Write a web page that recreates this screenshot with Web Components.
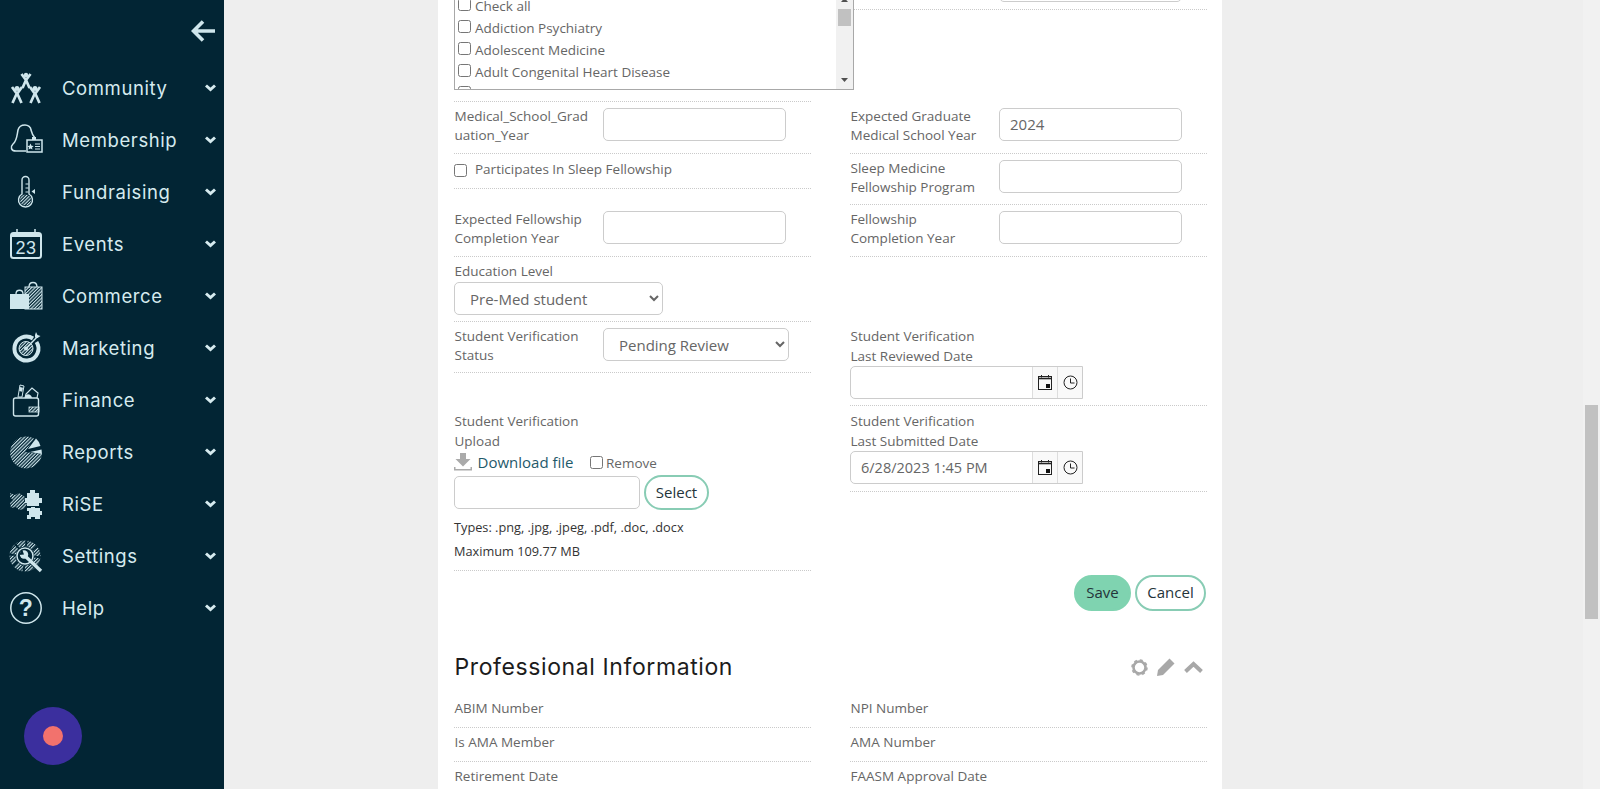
<!DOCTYPE html>
<html>
<head>
<meta charset="utf-8">
<title>Profile</title>
<style>
    html, body { margin: 0; height: 100%; overflow: hidden; }
    body { display: flex; font-family: "Open Sans", "Liberation Sans", sans-serif; background: #eeeeee; }
</style>
</head>
<body>

<side-bar>
    <nav-item icon="community">Community</nav-item>
    <nav-item icon="membership">Membership</nav-item>
    <nav-item icon="fundraising">Fundraising</nav-item>
    <nav-item icon="events">Events</nav-item>
    <nav-item icon="commerce">Commerce</nav-item>
    <nav-item icon="marketing">Marketing</nav-item>
    <nav-item icon="finance">Finance</nav-item>
    <nav-item icon="reports">Reports</nav-item>
    <nav-item icon="rise">RiSE</nav-item>
    <nav-item icon="settings">Settings</nav-item>
    <nav-item icon="help">Help</nav-item>
</side-bar>

<page-main>
    <form-grid>
        <field-cell stack style="height:142px;padding-top:35px">
            <check-list></check-list>
        </field-cell>
        <field-cell label=" " style="height:50px;padding-top:9px"><text-box></text-box></field-cell>

        <field-cell label="Medical_School_Graduation_Year" style="height:52px"><text-box></text-box></field-cell>
        <field-cell label="Expected Graduate Medical School Year" style="height:52px"><text-box value="2024"></text-box></field-cell>

        <field-cell style="height:35px;padding-top:5.5px">
            <check-row>Participates In Sleep Fellowship</check-row>
        </field-cell>
        <field-cell label="Sleep Medicine Fellowship Program" style="height:51px"><text-box></text-box></field-cell>

        <field-cell label="Expected Fellowship Completion Year" style="height:52px"><text-box></text-box></field-cell>
        <field-cell label="Fellowship Completion Year" style="height:52px"><text-box></text-box></field-cell>

        <field-cell stack label="Education Level" style="height:65px;padding-top:5px">
            <select-box value="Pre-Med student" width="209"></select-box>
        </field-cell>
        <div></div>

        <field-cell label="Student Verification Status" style="height:51px"><select-box value="Pending Review" width="186"></select-box></field-cell>
        <field-cell stack label="Student Verification&#10;Last Reviewed Date" lh="19.5" style="height:84px;padding-top:5px"><date-box></date-box></field-cell>

        <field-cell stack label="Student Verification&#10;Upload" lh="20" style="height:165px;padding-top:5px">
            <file-upload></file-upload>
        </field-cell>
        <field-cell stack label="Student Verification&#10;Last Submitted Date" lh="20" style="height:86px;padding-top:5px"><date-box value="6/28/2023 1:45 PM"></date-box></field-cell>
    </form-grid>

    <button-bar>
        <pill-button primary>Save</pill-button>
        <pill-button width="71">Cancel</pill-button>
    </button-bar>

    <section-head>Professional Information</section-head>

    <form-grid>
        <field-cell plain label="ABIM Number" style="height:34px"></field-cell>
        <field-cell plain label="NPI Number" style="height:34px"></field-cell>
        <field-cell plain label="Is AMA Member" style="height:34px"></field-cell>
        <field-cell plain label="AMA Number" style="height:34px"></field-cell>
        <field-cell plain label="Retirement Date" style="height:34px"></field-cell>
        <field-cell plain label="FAASM Approval Date" style="height:34px"></field-cell>
    </form-grid>
</page-main>

<page-scrollbar></page-scrollbar>

<script>
const HATCH = `<defs><pattern id="h" width="2.4" height="2.4" patternUnits="userSpaceOnUse" patternTransform="rotate(45)"><rect width="1.1" height="2.4" fill="#cfe6ec"/></pattern></defs>`;

const ICONS = {
    community: `<g fill="none" stroke="#cfe6ec" stroke-width="2.700">
            <path d="M12.500 3l4.500 6 4.500-6M17 9l-3.500 8M17 9l3.500 8"/>
            <path d="M3 16l5 7 5-7M8 22l-4.500 10M8 22l4.500 10"/>
            <path d="M21 16l5 7 5-7M26 22l-4.500 10M26 22l4.500 10"/>
        </g>
        <g fill="#cfe6ec"><circle cx="17" cy="4" r="2.200"/><circle cx="8" cy="17.500" r="2.500"/><circle cx="26" cy="17.500" r="2.500"/></g>`,
    membership: `<path d="M17 28H7C2 28 1 24 4 21c4-3 4-9 5-14 1-4 4-5 7-5s6 2 6 5c1 4 2 6 4 8" fill="none" stroke="#cfe6ec" stroke-width="1.500"/>
        <rect x="18" y="17" width="15" height="12" fill="#022534" stroke="#cfe6ec" stroke-width="1.500"/>
        <path d="M21.500 20.500l1 2.200 2.200.2-1.700 1.500.5 2.200-2-1.200-2 1.200.5-2.200-1.700-1.500 2.200-.2z" fill="#cfe6ec"/>
        <path d="M26 21h5M26 23.500h5M26 26h5" stroke="#cfe6ec"/><rect x="23" y="14" width="4" height="3" fill="#cfe6ec"/>`,
    fundraising: `<path d="M13 5a3.500 3.500 0 0 1 7 0V19a7 7 0 1 1-7 0Z" fill="none" stroke="#cfe6ec" stroke-width="1.400"/>
        <circle cx="16.500" cy="25" r="5.500" fill="url(#h)"/><path d="M16.500 9h3M16.500 13h3M16.500 17h3" stroke="#cfe6ec"/>
        <path d="M26 14l-3.500 2.500 3.500 2.500z" fill="#cfe6ec"/>`,
    events: `<rect x="2" y="6" width="30" height="25" rx="2.500" fill="none" stroke="#cfe6ec" stroke-width="2"/>
        <rect x="2" y="6" width="30" height="4" fill="#cfe6ec"/>
        <path d="M8 2v6M26 2v6" stroke="#cfe6ec" stroke-width="1.500"/>
        <text x="17" y="27" text-anchor="middle" font-family="Liberation Sans" font-size="18" fill="#cfe6ec">23</text>`,
    commerce: `<rect x="16" y="8" width="17" height="22" fill="url(#h)" stroke="#cfe6ec"/>
        <path d="M20 8c0-6 8-6 8 0" fill="none" stroke="#cfe6ec" stroke-width="1.300"/>
        <path d="M7 15c0-5 7-5 7 0" fill="none" stroke="#cfe6ec" stroke-width="1.300"/>
        <rect x="1" y="15" width="19" height="15" fill="#cfe6ec"/>`,
    marketing: `<path d="M24 7.500A12 12 0 1 0 27.500 11" fill="none" stroke="#cfe6ec" stroke-width="4"/>
        <circle cx="17" cy="17.500" r="7" fill="url(#h)" stroke="#cfe6ec"/><circle cx="17" cy="17.500" r="2" fill="#cfe6ec"/>
        <path d="M17 17.500L29 5" stroke="#cfe6ec" stroke-width="1.500"/><path d="M26 4l1-3 1.500 3 3 1-3 2-2.500-.5z" fill="#cfe6ec"/>`,
    finance: `<rect x="4.500" y="15" width="25" height="18" rx="2" fill="none" stroke="#cfe6ec" stroke-width="1.400"/>
        <rect x="20" y="24" width="10" height="5" fill="url(#h)" stroke="#cfe6ec" stroke-width=".8"/>
        <path d="M9 14l2-12 4 1-2 11z" fill="none" stroke="#cfe6ec"/><path d="M11 4l3 .8-.8 4-3-.8z" fill="#cfe6ec"/>
        <path d="M16 15l1-4 6-6 6 5-1 5" fill="none" stroke="#cfe6ec" stroke-width="1.200"/><path d="M16 15c0-5 6-5 7 0z" fill="#cfe6ec"/>`,
    reports: `<path d="M16 17L25 3.500A16 16 0 1 0 33 19Z" fill="url(#h)"/>
        <path d="M19 14L27 3.500A15 15 0 0 1 31.500 11Z" fill="#cfe6ec"/>
        <path d="M21 17L32.500 14.500L33 19Z" fill="#cfe6ec"/>`,
    rise: `<path d="M1 6l5 2 4-2 6 4-1 4 3 3-3 5-5 1-3-3-5 1-1-5 3-3-3-3z" fill="url(#h)"/>
        <path d="M18 6h3V3h5v3h4v5h3v5h-3v3h-12v-3h-2v-5h2z" fill="#cfe6ec"/>
        <path d="M18 21h4v-1h4v1h5v3h2v4h-2v4h-5v-2h-4v2h-4v-4h2v-4h-2z" fill="#cfe6ec"/>`,
    settings: `<circle cx="16" cy="17" r="12.500" fill="none" stroke="url(#h)" stroke-width="6"/>
        <circle cx="16" cy="17" r="12.500" fill="none" stroke="#022534" stroke-width="6.500" stroke-dasharray="2 7.800"/>
        <circle cx="16" cy="17" r="8" fill="#022534" stroke="#cfe6ec" stroke-width="1.500"/>
        <path d="M15 16l17 16" stroke="#cfe6ec" stroke-width="3.500"/><circle cx="15" cy="15.500" r="4.200" fill="#cfe6ec"/><path d="M13 10l2 5.500-5 .5z" fill="#022534"/>`,
    help: `<circle cx="17" cy="17" r="15.200" fill="none" stroke="#cfe6ec" stroke-width="1.500"/>
        <text x="17" y="25" text-anchor="middle" font-family="Liberation Sans" font-weight="700" font-size="23" fill="#cfe6ec">?</text>`
};

customElements.define('side-bar', class extends HTMLElement {
    constructor() {
        super();
        this.attachShadow({mode: 'open'}).innerHTML = `
            <style>
                :host {
                    display: block;
                    position: relative;
                    flex: 0 0 224px;
                    height: 100%;
                    background: #022534;
                }
                #back { display: flex; justify-content: flex-end; align-items: center; height: 61.5px; padding-right: 9px; box-sizing: border-box; }
                #bubble {
                    position: absolute; left: 24px; top: 707px;
                    width: 58px; height: 58px; border-radius: 50%;
                    background: #3b2f9e;
                    display: flex; align-items: center; justify-content: center;
                }
                #bubble div { width: 20px; height: 20px; border-radius: 50%; background: #f2726d; }
            </style>
            <div id="back">
                <svg width="24" height="24" viewBox="0 0 24 24" fill="none" stroke="#cfe6ec" stroke-width="3.600">
                    <path d="M24 12H3M12 2.500L2.500 12 12 21.500"/>
                </svg>
            </div>
            <slot></slot>
            <div id="bubble"><div></div></div>
        `;
    }
});

customElements.define('nav-item', class extends HTMLElement {
    constructor() {
        super();
        this.attachShadow({mode: 'open'});
    }
    connectedCallback() {
        this.shadowRoot.innerHTML = `
            <style>
                :host {
                    display: flex; align-items: center;
                    height: 52px; padding: 0 8px 0 9px; box-sizing: border-box;
                    font-family: Inter, "Liberation Sans", sans-serif;
                    font-size: 18.5px; font-weight: 400; letter-spacing: .6px; color: #d6ebef;
                }
                svg { flex: none; margin-right: 19px; }
                span { flex: 1; }
            </style>
            <svg width="34" height="34" viewBox="0 0 34 34">${HATCH}${ICONS[this.getAttribute('icon')]}</svg>
            <span><slot></slot></span>
            <svg width="11" height="8" viewBox="0 0 11 8" style="margin:0" fill="none" stroke="#d6ebef" stroke-width="3"><path d="M1 1.500l4.500 4 4.500-4"/></svg>
        `;
    }
});

customElements.define('page-main', class extends HTMLElement {
    constructor() {
        super();
        this.attachShadow({mode: 'open'}).innerHTML = `
            <style>
                :host { display: block; flex: 1; height: 100%; overflow: hidden; }
                #card {
                    width: 784px; margin: -40px 0 0 214px;
                    padding: 0 15px 0 16px; box-sizing: border-box;
                    background: #fff; min-height: 900px;
                }
            </style>
            <div id="card"><slot></slot></div>
        `;
    }
});

customElements.define('form-grid', class extends HTMLElement {
    constructor() {
        super();
        this.attachShadow({mode: 'open'}).innerHTML = `
            <style>
                :host { display: grid; grid-template-columns: 357px 357px; column-gap: 39px; align-items: start; }
            </style>
            <slot></slot>
        `;
    }
});

customElements.define('field-cell', class extends HTMLElement {
    constructor() {
        super();
        this.attachShadow({mode: 'open'});
    }
    connectedCallback() {
        const label = this.getAttribute('label');
        const lh = this.getAttribute('lh') || 19;
        const stack = this.hasAttribute('stack');
        const plain = this.hasAttribute('plain');
        this.shadowRoot.innerHTML = `
            <style>
                :host {
                    display: block; box-sizing: border-box; padding-top: ${plain ? 4.5 : 6}px;
                    border-bottom: 1px dotted #cacaca;
                    font-size: 13.5px; color: #666;
                }
                #wrap { display: ${stack ? 'block' : 'flex'}; align-items: flex-start; }
                #label {
                    margin-left: .5px; line-height: ${lh}px; white-space: pre-line;
                    overflow-wrap: break-word;
                    ${stack || plain ? '' : 'width: 136.5px; flex: none; margin-right: 12px; margin-top: -1.5px;'}
                }
                ${stack && label && !label.includes('\n') ? '#label { margin-bottom: 1px; }' : ''}
            </style>
            <div id="wrap">
                ${label ? `<div id="label">${label}</div>` : ''}
                <div><slot></slot></div>
            </div>
        `;
    }
});

customElements.define('text-box', class extends HTMLElement {
    constructor() {
        super();
        this.attachShadow({mode: 'open'});
    }
    connectedCallback() {
        this.shadowRoot.innerHTML = `
            <style>
                :host { display: block; }
                input {
                    display: block; width: ${this.getAttribute('width') || 183}px; height: 33px; box-sizing: border-box;
                    border: 1px solid #ccc; border-radius: 5px; padding: 0 10px 2px;
                    font: 15px "Open Sans", sans-serif; color: #666; background: #fff; outline: 0;
                }
            </style>
            <input type="text" value="${this.getAttribute('value') || ''}">
        `;
    }
});

customElements.define('select-box', class extends HTMLElement {
    constructor() {
        super();
        this.attachShadow({mode: 'open'});
    }
    connectedCallback() {
        this.shadowRoot.innerHTML = `
            <style>
                :host { display: block; }
                select {
                    display: block; width: ${this.getAttribute('width')}px; height: 33px; box-sizing: border-box;
                    border: 1px solid #ccc; border-radius: 5px; padding: 0 11px;
                    font: 15px "Open Sans", sans-serif; color: #666; background: #fff; outline: 0;
                }
            </style>
            <select><option>${this.getAttribute('value')}</option></select>
        `;
    }
});

customElements.define('date-box', class extends HTMLElement {
    constructor() {
        super();
        this.attachShadow({mode: 'open'});
    }
    connectedCallback() {
        this.shadowRoot.innerHTML = `
            <style>
                :host {
                    display: flex; width: 233px; height: 33px; box-sizing: border-box;
                    border: 1px solid #ccc; border-radius: 5px 0 0 5px;
                }
                input {
                    flex: 1; min-width: 0; border: 0; padding: 0 10px; background: transparent; outline: 0;
                    border-radius: 5px 0 0 5px;
                    font: 14.5px "Open Sans", sans-serif; color: #666;
                }
                .addon { flex: 0 0 25px; display: flex; align-items: center; justify-content: center; background: #f9f9f9; border-left: 1px solid #ddd; box-sizing: border-box; }
            </style>
            <input type="text" value="${this.getAttribute('value') || ''}">
            <div class="addon">
                <svg width="14" height="15" viewBox="0 0 14 15" fill="none" stroke="#222">
                    <rect x=".5" y="1.500" width="13" height="13"/><path d="M.5 3.500h13" stroke-width="1.600"/>
                    <path d="M3.500 0v2.500M10.500 0v2.500"/><rect x="8" y="9" width="4" height="4" fill="#111" stroke="none"/>
                </svg>
            </div>
            <div class="addon">
                <svg width="15" height="15" viewBox="0 0 15 15" fill="none" stroke="#222">
                    <circle cx="7.500" cy="7.500" r="6.500"/><path d="M7.500 3.500v4.500h4"/>
                </svg>
            </div>
        `;
    }
});

customElements.define('check-row', class extends HTMLElement {
    constructor() {
        super();
        this.attachShadow({mode: 'open'}).innerHTML = `
            <style>
                :host { display: flex; align-items: flex-start; height: 19px; line-height: 19px; font-size: 13.5px; color: #666; }
                input { width: 13px; height: 13px; margin: 4.5px 8px 0 0; flex: none; }
            </style>
            <input type="checkbox"><span><slot></slot></span>
        `;
    }
});

customElements.define('check-list', class extends HTMLElement {
    constructor() {
        super();
        const items = ['Check all', 'Addiction Psychiatry', 'Adolescent Medicine', 'Adult Congenital Heart Disease', ''];
        this.attachShadow({mode: 'open'}).innerHTML = `
            <style>
                :host {
                    display: flex; width: 400px; height: 95px; box-sizing: border-box;
                    border: 1px solid #a8a8a8; background: #fff; position: relative;
                }
                #list { flex: 1; overflow: hidden; padding-left: 3px; }
                .row { display: flex; align-items: center; height: 22px; font-size: 13.5px; line-height: 12px; color: #666; white-space: nowrap; }
                .row:first-child { margin-top: -1.5px; }
                input { width: 13px; height: 13px; margin: 0 4px 0 0; flex: none; position: relative; top: -1px; }
                #bar { flex: 0 0 17px; background: #f1f1f1; display: flex; flex-direction: column; align-items: center; }
                #thumb { width: 13px; height: 17px; margin-top: 5px; background: #c1c1c1; }
                svg { display: block; flex: none; }
                #gap { flex: 1; }
            </style>
            <div id="list">
                ${items.map(t => `<div class="row"><input type="checkbox"><span>${t}</span></div>`).join('')}
            </div>
            <div id="bar">
                <svg width="9" height="8" viewBox="0 0 9 8" style="margin-top:0"><path d="M4.500 2L8 6H1z" fill="#505050"/></svg>
                <div id="thumb"></div>
                <div id="gap"></div>
                <svg width="9" height="8" viewBox="0 0 9 8" style="margin-bottom:5px"><path d="M1 2h7L4.500 6z" fill="#505050"/></svg>
            </div>
        `;
    }
});

customElements.define('file-upload', class extends HTMLElement {
    constructor() {
        super();
        this.attachShadow({mode: 'open'}).innerHTML = `
            <style>
                :host { display: block; }
                #links { display: flex; align-items: center; height: 24px; margin-bottom: 0; }
                #links svg { margin-right: 5.5px; position: relative; top: -1px; }
                a { color: #1f5a6b; font-size: 15px; text-decoration: none; margin-right: 16px; position: relative; top: -1px; }
                #remove { display: flex; align-items: center; font-size: 13.5px; color: #666; }
                #remove input { width: 13px; height: 13px; margin: 0 3.5px 0 0; position: relative; top: -1px; }
                #pick { display: flex; align-items: center; gap: 4px; }
                #pick input { width: 186px; height: 33px; box-sizing: border-box; border: 1px solid #ccc; border-radius: 5px; outline: 0; }
                p { margin: 0; font-size: 12.75px; line-height: 24px; color: #333; }
                #types { margin-top: 5px; }
            </style>
            <div id="links">
                <svg width="18" height="18" viewBox="0 0 18 18" fill="#aaa">
                    <path d="M6 0h6v6h4.500L9 13.500 1.500 6H6z"/><path d="M0 14h1.500v2h15v-2H18v3.500H0z"/>
                </svg>
                <a href="#">Download file</a>
                <label id="remove"><input type="checkbox">Remove</label>
            </div>
            <div id="pick"><input type="text"><pill-button width="65" height="35">Select</pill-button></div>
            <p id="types">Types: .png, .jpg, .jpeg, .pdf, .doc, .docx</p>
            <p>Maximum 109.77 MB</p>
        `;
    }
});

customElements.define('pill-button', class extends HTMLElement {
    constructor() {
        super();
        this.attachShadow({mode: 'open'});
    }
    connectedCallback() {
        const primary = this.hasAttribute('primary');
        const h = this.getAttribute('height') || 36;
        this.shadowRoot.innerHTML = `
            <style>
                :host {
                    display: flex; align-items: center; justify-content: center; flex: none;
                    width: ${this.getAttribute('width') || 57}px; height: ${h}px; box-sizing: border-box;
                    border: 2px solid ${primary ? '#7fd3b0' : '#88ccb4'}; border-radius: 18px;
                    padding-bottom: 2px;
                    background: ${primary ? '#7fd3b0' : '#fff'};
                    font-size: 15px; color: #24343a;
                }
            </style>
            <slot></slot>
        `;
    }
});

customElements.define('button-bar', class extends HTMLElement {
    constructor() {
        super();
        this.attachShadow({mode: 'open'}).innerHTML = `
            <style>
                :host { display: flex; justify-content: flex-end; gap: 4px; margin-top: 4px; padding-right: 1px; }
            </style>
            <slot></slot>
        `;
    }
});

customElements.define('section-head', class extends HTMLElement {
    constructor() {
        super();
        this.attachShadow({mode: 'open'}).innerHTML = `
            <style>
                :host {
                    display: flex; align-items: center; height: 30px; margin: 41px 0 12px; padding: 0 4px 0 .5px;
                }
                h2 {
                    flex: 1; margin: 0; font: 400 23px Inter, "Liberation Sans", sans-serif; letter-spacing: .6px; color: #1c1c1c;
                }
                #icons { display: flex; align-items: center; gap: 9px; }
                svg { display: block; }
            </style>
            <h2><slot></slot></h2>
            <div id="icons">
                <svg width="17" height="17" viewBox="0 0 17 17" fill="none" stroke="#a8a8a8">
                    <circle cx="8.500" cy="8.500" r="6" stroke-width="2.600"/>
                    <circle cx="8.500" cy="8.500" r="7.500" stroke-width="1.500" stroke-dasharray="3 2.900"/>
                </svg>
                <svg width="18" height="18" viewBox="0 0 18 18" fill="#a8a8a8">
                    <path d="M12.500 .5l5 5L6 17l-6 1 1-6z"/>
                </svg>
                <svg width="19" height="12" viewBox="0 0 19 12" fill="none" stroke="#a8a8a8" stroke-width="4">
                    <path d="M1.500 10.500L9.500 3l8 7.500"/>
                </svg>
            </div>
        `;
    }
});

customElements.define('page-scrollbar', class extends HTMLElement {
    constructor() {
        super();
        this.attachShadow({mode: 'open'}).innerHTML = `
            <style>
                :host { display: block; flex: 0 0 17px; height: 100%; background: #f1f1f1; }
                div { width: 13px; height: 214px; margin: 405px 0 0 2px; background: #c1c1c1; }
            </style>
            <div></div>
        `;
    }
});
</script>
</body>
</html>
